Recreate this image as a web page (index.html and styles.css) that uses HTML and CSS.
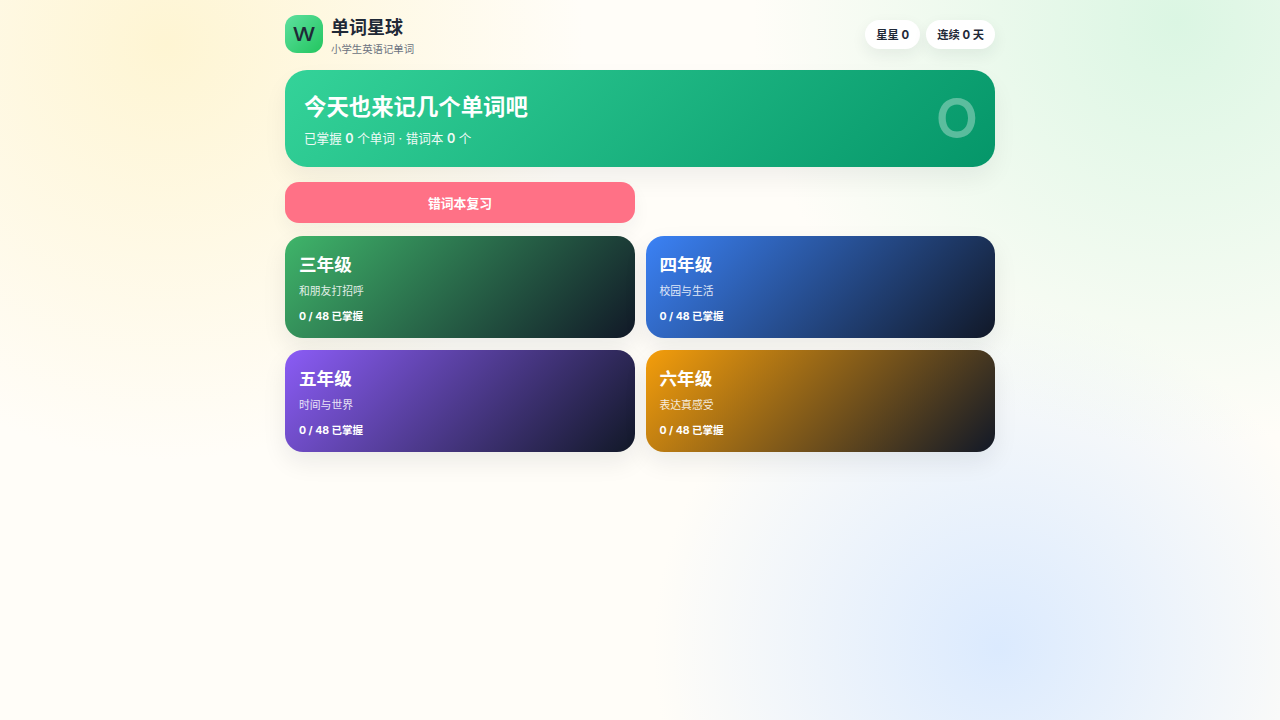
FILE: index.html
```html
<!DOCTYPE html>
<html lang="zh-CN">

<head>
    <meta charset="UTF-8">
    <meta name="viewport" content="width=device-width, initial-scale=1.0">
    <title>单词星球</title>
    <link rel="stylesheet" href="styles.css">
</head>

<body>
    <div class="app">
        <header class="topbar">
            <div class="brand">
                <div class="logo"><span class="logo-letter">W</span></div>
                <div>
                    <div class="brand-name">单词星球</div>
                    <div class="brand-sub">小学生英语记单词</div>
                </div>
            </div>
            <div class="pills">
                <div class="pill">星星 0</div>
                <div class="pill">连续 0 天</div>
            </div>
        </header>

        <section class="hero">
            <div>
                <h1>今天也来记几个单词吧</h1>
                <p>已掌握 <span class="count">0</span> 个单词 · 错词本 <span class="count">0</span> 个</p>
            </div>
            <div class="hero-num">O</div>
        </section>

        <div class="actions">
            <button class="review-btn">错词本复习</button>
        </div>

        <div class="grades">
            <div class="grade grade-3">
                <h2>三年级</h2>
                <p>和朋友打招呼</p>
                <div class="progress">0 / 48 已掌握</div>
            </div>
            <div class="grade grade-4">
                <h2>四年级</h2>
                <p>校园与生活</p>
                <div class="progress">0 / 48 已掌握</div>
            </div>
            <div class="grade grade-5">
                <h2>五年级</h2>
                <p>时间与世界</p>
                <div class="progress">0 / 48 已掌握</div>
            </div>
            <div class="grade grade-6">
                <h2>六年级</h2>
                <p>表达真感受</p>
                <div class="progress">0 / 48 已掌握</div>
            </div>
        </div>
    </div>
</body>

</html>
```

FILE: styles.css
```css
* {
    box-sizing: border-box;
}

html,
body {
    height: 100%;
}

body {
    margin: 0;
    font-family: Inter, "Noto Sans CJK SC", sans-serif;
    color: #1f2937;
    background:
        radial-gradient(circle at 13% 6%, #fef5d3, transparent 32%),
        radial-gradient(circle at 92% 3%, #dbf6e3, transparent 31%),
        radial-gradient(circle at 78% 90%, #dbeafe, transparent 29%),
        #fffdf8;
}

.app {
    width: 710px;
    margin: 0 auto;
    padding-top: 15px;
}

.topbar {
    display: flex;
    justify-content: space-between;
    align-items: center;
    height: 40px;
    margin-bottom: 15px;
}

.brand {
    display: flex;
    align-items: center;
    gap: 8px;
}

.logo {
    width: 38px;
    height: 38px;
    margin-top: -2px;
    border-radius: 12px;
    display: flex;
    align-items: center;
    justify-content: center;
    background: linear-gradient(135deg, #5ee0a0, #22c55e);
    font-size: 18px;
    font-weight: 500;
}

.logo-letter {
    display: block;
    transform: scaleX(1.25);
}

.brand-name {
    font-size: 18px;
    font-weight: 700;
    line-height: 26px;
    margin-top: 2px;
}

.brand-sub {
    font-size: 10.4px;
    line-height: 17px;
    color: #6b7280;
}

.pills {
    display: flex;
    gap: 6px;
    margin-top: -1px;
}

.pill {
    height: 29px;
    padding: 1px 11px 0;
    border-radius: 15px;
    background: #fff;
    font-size: 11.3px;
    font-weight: 700;
    line-height: 29px;
    box-shadow: 0 6px 16px rgba(31, 41, 55, 0.07);
}

.hero {
    display: flex;
    justify-content: space-between;
    align-items: center;
    height: 97px;
    padding: 0 17px 0 19px;
    border-radius: 22px;
    color: #fff;
    background: linear-gradient(135deg, #34d399, #059669);
    box-shadow: 0 12px 24px rgba(15, 23, 42, 0.06);
}

.hero h1 {
    margin: 2.5px 0 6.5px;
    font-size: 22.4px;
    line-height: 32px;
    font-weight: 700;
}

.hero p {
    margin: 0;
    font-size: 12.6px;
    line-height: 20px;
    opacity: 0.92;
}

.hero p .count {
    font-weight: 600;
}

.hero-num {
    margin-top: -2px;
    font-size: 55px;
    font-weight: 600;
    opacity: 0.33;
}

.actions {
    display: grid;
    grid-template-columns: 1fr 1fr;
    gap: 10px;
    margin-top: 15px;
}

.review-btn {
    height: 41px;
    border: none;
    border-radius: 14px;
    background: #ff7186;
    color: #fff;
    font-family: inherit;
    font-size: 12.8px;
    font-weight: 700;
    box-shadow: 0 8px 18px rgba(31, 41, 55, 0.05);
}

.grades {
    display: grid;
    grid-template-columns: 1fr 1fr;
    gap: 12px 11px;
    margin-top: 13px;
}

.grade {
    height: 102px;
    padding: 15px 14px 0;
    border-radius: 18px;
    color: #fff;
    box-shadow: 0 10px 24px rgba(15, 23, 42, 0.08);
}

.grade h2 {
    margin: 0;
    font-size: 17.6px;
    line-height: 28px;
    font-weight: 700;
}

.grade p {
    margin: 5px 0 0;
    font-size: 10.8px;
    line-height: 16px;
    opacity: 0.85;
}

.progress {
    margin-top: 9px;
    font-size: 10.5px;
    line-height: 16px;
    font-weight: 700;
}

.grade-3 {
    background: linear-gradient(135deg, #3fb56a, #111827);
}

.grade-4 {
    background: linear-gradient(135deg, #3b82f6, #111827);
}

.grade-5 {
    background: linear-gradient(135deg, #8b5cf6, #111827);
}

.grade-6 {
    background: linear-gradient(135deg, #f59e0b, #111827);
}
```
